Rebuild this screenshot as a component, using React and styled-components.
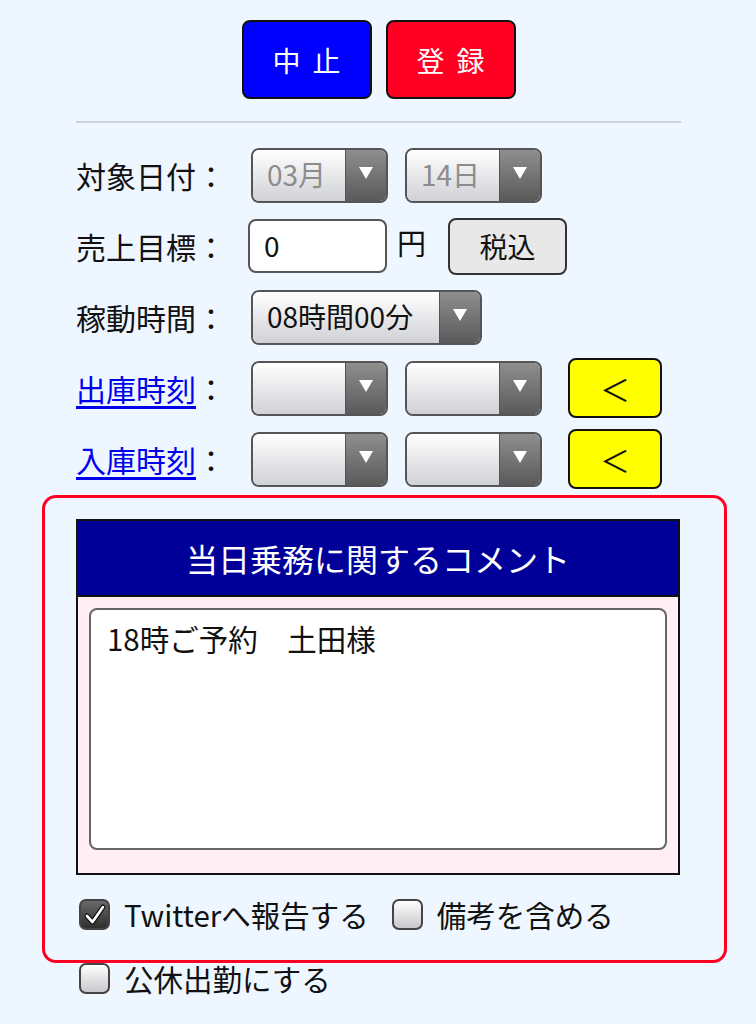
import React from "react";
import styled, { createGlobalStyle } from "styled-components";

const GlobalStyle = createGlobalStyle`
  html, body {
    margin: 0;
    padding: 0;
    background: #eef6ff;
  }
  body {
    font-family: "Noto Sans CJK JP", "Noto Sans", sans-serif;
    line-height: 1.2;
    color: #111;
  }
`;

const PAGE = styled.div`
  width: 605px;
  margin-left: 76px;
  padding-top: 20px;
  padding-bottom: 30px;
`;

const TOPBAR = styled.div`
  display: flex;
  justify-content: center;
  gap: 14px;
`;

const ACTION = styled.button`
  width: 130px;
  height: 79px;
  border: 2px solid #111;
  border-radius: 8px;
  background: ${(p) => p.bg};
  color: #fff;
  font-family: inherit;
  font-size: 28px;
  letter-spacing: 12px;
  padding: 0 0 0 12px;
`;

const DIVIDER = styled.div`
  height: 2px;
  margin-top: 22px;
  background: #cdd3da;
`;

const ROW = styled.div`
  display: flex;
  align-items: center;
  height: 60px;
  margin-top: ${(p) => (p.first ? 22 : 11)}px;
`;

const LABEL = styled.div`
  width: 175px;
  flex-shrink: 0;
  font-size: 30px;
  white-space: nowrap;
`;

const LINK = styled.a`
  color: #0000ee;
  text-decoration: underline;
  text-underline-offset: 5px;
`;

const SELECT = styled.div`
  width: ${(p) => p.w}px;
  height: 55px;
  box-sizing: border-box;
  border: 2px solid #555;
  border-radius: 8px;
  display: flex;
  overflow: hidden;
  margin-right: ${(p) => p.gap || 0}px;
  flex-shrink: 0;
`;

const SELECTVALUE = styled.div`
  flex: 1;
  display: flex;
  align-items: center;
  padding-left: 14px;
  background: linear-gradient(#ffffff, #d0d1d6);
  font-size: 28px;
  color: ${(p) => (p.disabled ? "#8c8c8c" : "#111")};
`;

const SELECTARROW = styled.div`
  width: 40px;
  display: flex;
  align-items: center;
  justify-content: center;
  border-left: 1px solid #555;
  background: linear-gradient(#8e8e8e, #5a5a5a);

  &::after {
    content: "";
    border-left: 7px solid transparent;
    border-right: 7px solid transparent;
    border-top: 12px solid #fff;
    margin-bottom: 4px;
  }
`;

const INPUT = styled.div`
  width: 139px;
  height: 54px;
  box-sizing: border-box;
  margin-left: -3px;
  border: 2px solid #555;
  border-radius: 8px;
  background: #fff;
  display: flex;
  align-items: center;
  padding-left: 14px;
  font-size: 28px;
`;

const UNIT = styled.span`
  font-size: 29px;
  margin: 0 22px 8px 10px;
`;

const GRAYBUTTON = styled.button`
  width: 119px;
  height: 57px;
  border: 2px solid #333;
  border-radius: 8px;
  background: #e8e8e8;
  font-family: inherit;
  font-size: 28px;
  color: #111;
  padding: 0;
`;

const YELLOWBUTTON = styled.button`
  width: 94px;
  height: 60px;
  margin-left: 9px;
  border: 2px solid #111;
  border-radius: 8px;
  background: #ffff00;
  font-family: inherit;
  font-size: 30px;
  color: #111;
  padding: 0;
`;

const REDBOX = styled.div`
  width: 685px;
  box-sizing: border-box;
  margin: 6px 0 0 -34px;
  padding: 21px 44px 28px 31px;
  border: 3px solid #ff0022;
  border-radius: 14px;
`;

const TABLE = styled.div`
  border: 2px solid #111;
`;

const TABLEHEAD = styled.div`
  height: 74px;
  display: flex;
  align-items: center;
  justify-content: center;
  background: #000099;
  color: #fff;
  font-size: 32px;
  border-bottom: 2px solid #111;
`;

const TABLEBODY = styled.div`
  background: #ffeef4;
  padding: 11px 11px 23px 11px;
`;

const TEXTAREA = styled.div`
  height: 242px;
  box-sizing: border-box;
  border: 2px solid #666;
  border-radius: 8px;
  background: #fff;
  padding: 11px 16px;
  font-size: 29.5px;
`;

const CHECKROW = styled.div`
  display: flex;
  align-items: center;
  height: 35px;
  margin-top: ${(p) => p.top}px;
  padding-left: ${(p) => p.indent || 0}px;
`;

const CHECKLABEL = styled.label`
  display: flex;
  align-items: center;
  gap: 14px;
  font-size: 29.5px;
  margin-right: 23px;
`;

const BOX = styled.span`
  width: 31px;
  height: 31px;
  box-sizing: border-box;
  border: 2px solid #444;
  border-radius: 7px;
  display: flex;
  align-items: center;
  justify-content: center;
  background: ${(p) =>
    p.checked
      ? "linear-gradient(#6a6a6a, #2e2e2e)"
      : "linear-gradient(#ffffff, #c8c8cc)"};
`;

function Select({ w, gap, value, disabled }) {
  return (
    <SELECT w={w} gap={gap}>
      <SELECTVALUE disabled={disabled}>{value}</SELECTVALUE>
      <SELECTARROW />
    </SELECT>
  );
}

function Check({ checked, children }) {
  return (
    <CHECKLABEL>
      <BOX checked={checked}>
        {checked && (
          <svg width="24" height="24" viewBox="0 0 24 24">
            <path
              d="M4 13 L9.5 19 L20 4"
              fill="none"
              stroke="#111"
              strokeWidth="5"
              strokeLinecap="round"
              strokeLinejoin="round"
            />
            <path
              d="M4 13 L9.5 19 L20 4"
              fill="none"
              stroke="#fff"
              strokeWidth="2.6"
              strokeLinecap="round"
              strokeLinejoin="round"
            />
          </svg>
        )}
      </BOX>
      {children}
    </CHECKLABEL>
  );
}

export default function App() {
  return (
    <>
      <GlobalStyle />
      <PAGE>
        <TOPBAR>
          <ACTION bg="#0000ff">中止</ACTION>
          <ACTION bg="#ff0022">登録</ACTION>
        </TOPBAR>
        <DIVIDER />

        <ROW first>
          <LABEL>対象日付：</LABEL>
          <Select w={137} gap={17} value="03月" disabled />
          <Select w={137} value="14日" disabled />
        </ROW>

        <ROW>
          <LABEL>売上目標：</LABEL>
          <INPUT>0</INPUT>
          <UNIT>円</UNIT>
          <GRAYBUTTON>税込</GRAYBUTTON>
        </ROW>

        <ROW>
          <LABEL>稼動時間：</LABEL>
          <Select w={231} value="08時間00分" />
        </ROW>

        <ROW>
          <LABEL>
            <LINK>出庫時刻</LINK>：
          </LABEL>
          <Select w={137} gap={17} value="" />
          <Select w={137} gap={17} value="" />
          <YELLOWBUTTON>＜</YELLOWBUTTON>
        </ROW>

        <ROW>
          <LABEL>
            <LINK>入庫時刻</LINK>：
          </LABEL>
          <Select w={137} gap={17} value="" />
          <Select w={137} gap={17} value="" />
          <YELLOWBUTTON>＜</YELLOWBUTTON>
        </ROW>

        <REDBOX>
          <TABLE>
            <TABLEHEAD>当日乗務に関するコメント</TABLEHEAD>
            <TABLEBODY>
              <TEXTAREA>18時ご予約　土田様</TEXTAREA>
            </TABLEBODY>
          </TABLE>
          <CHECKROW top={22} indent={3}>
            <Check checked>Twitterへ報告する</Check>
            <Check>備考を含める</Check>
          </CHECKROW>
        </REDBOX>

        <CHECKROW top={-2} indent={3}>
          <Check>公休出勤にする</Check>
        </CHECKROW>
      </PAGE>
    </>
  );
}
